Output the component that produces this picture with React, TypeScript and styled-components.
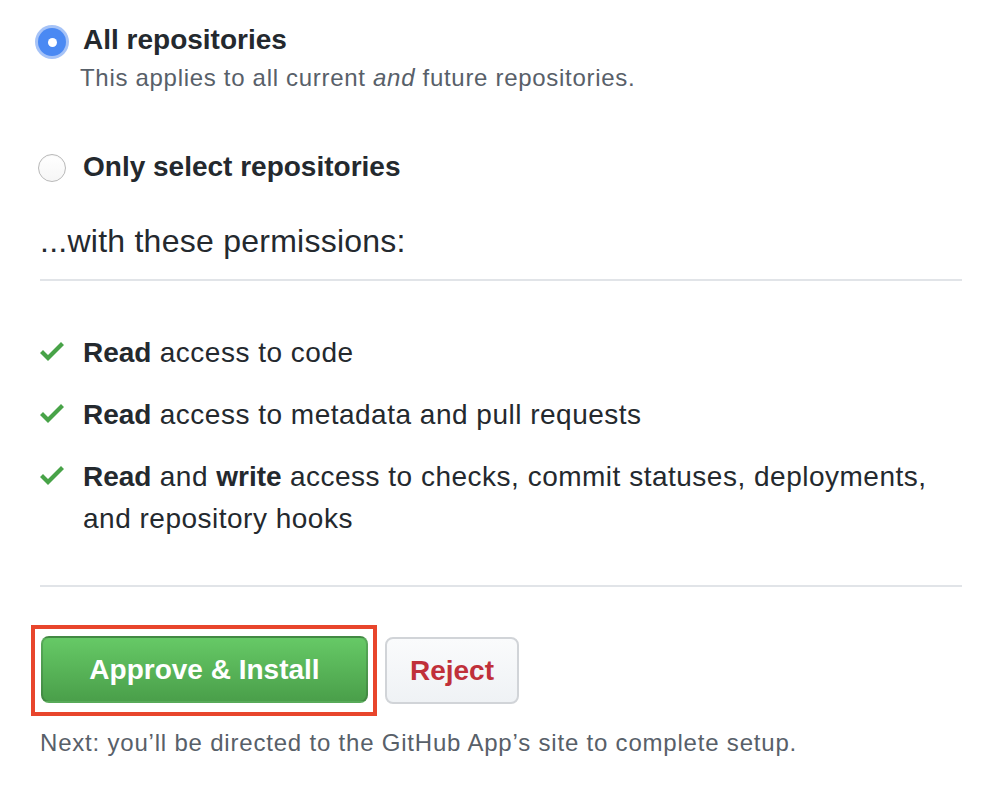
import React from "react";
import styled, { createGlobalStyle } from "styled-components";

const Global = createGlobalStyle`
  html, body { margin: 0; padding: 0; background: #ffffff; }
  body { font-family: "Liberation Sans", Arial, sans-serif; color: #24292e; }
`;

const Page = styled.div`
  width: 922px;
  padding: 20px 24px 30px 40px;
`;

const RadioRow = styled.label<{ $mt?: number }>`
  display: flex;
  align-items: flex-start;
  gap: 17px;
  margin-top: ${(p) => p.$mt ?? 0}px;
  font-size: 28px;
  font-weight: 700;
  line-height: 40px;
  color: #24292e;
`;

const Radio = styled.span<{ $checked?: boolean; $offset: number }>`
  flex: none;
  box-sizing: border-box;
  width: 28px;
  height: 28px;
  margin-top: ${(p) => p.$offset}px;
  margin-left: -2px;
  border-radius: 50%;
  display: flex;
  align-items: center;
  justify-content: center;
  ${(p) =>
    p.$checked
      ? `
    background: #4a89f3;
    box-shadow: 0 0 0 3px rgba(92, 146, 240, 0.55);
    &::after {
      content: "";
      width: 9px;
      height: 9px;
      border-radius: 50%;
      background: #ffffff;
    }
  `
      : `
    background: linear-gradient(#ffffff, #f6f6f6);
    border: 1.5px solid #b9b9b9;
    box-shadow: inset 0 1px 1px rgba(0,0,0,0.04);
  `}
`;

const Description = styled.p`
  margin: 0 0 0 40px;
  font-size: 24px;
  line-height: 36px;
  letter-spacing: 0.7px;
  color: #586069;
`;

const SectionTitle = styled.h3`
  margin: 34px 0 0 0;
  padding-bottom: 18px;
  border-bottom: 2px solid #e1e4e8;
  font-size: 32px;
  font-weight: 400;
  line-height: 40px;
  letter-spacing: 0.25px;
  color: #24292e;
`;

const PermList = styled.ul`
  list-style: none;
  margin: 51px 0 0 0;
  padding: 0 0 45px 0;
  border-bottom: 2px solid #e1e4e8;
  display: flex;
  flex-direction: column;
  gap: 20px;
`;

const PermItem = styled.li`
  display: flex;
  align-items: flex-start;
  gap: 19px;
  font-size: 28px;
  line-height: 42px;
  letter-spacing: 0.5px;
  color: #24292e;
  b { font-weight: 700; letter-spacing: 0; }
`;

const CheckIcon = styled.svg`
  flex: none;
  width: 24px;
  height: 32px;
  margin-top: 3px;
  fill: #48a348;
`;

const Actions = styled.div`
  display: flex;
  align-items: flex-start;
  gap: 8px;
  margin: 38px 0 0 -9px;
`;

const Highlight = styled.div`
  display: inline-flex;
  border: 4px solid #e8452c;
  padding: 7px 5px 9px 6px;
`;

const PrimaryButton = styled.button`
  box-sizing: border-box;
  height: 67px;
  width: 327px;
  border: 2px solid rgba(27, 31, 35, 0.18);
  border-radius: 8px;
  background: linear-gradient(180deg, #66c966 0%, #4a9f4a 100%);
  color: #ffffff;
  font-family: "Liberation Sans", Arial, sans-serif;
  font-size: 28px;
  font-weight: 700;
  cursor: pointer;
`;

const SecondaryButton = styled.button`
  box-sizing: border-box;
  margin-top: 12px;
  height: 67px;
  width: 134px;
  border: 2px solid #d1d4d8;
  border-radius: 8px;
  background: linear-gradient(180deg, #fafbfc 0%, #eff2f5 100%);
  color: #c0303a;
  font-family: "Liberation Sans", Arial, sans-serif;
  font-size: 28px;
  font-weight: 700;
  cursor: pointer;
`;

const Note = styled.p`
  margin: 9px 0 0 0;
  font-size: 24px;
  line-height: 36px;
  letter-spacing: 0.8px;
  color: #586069;
`;

const Check = () => (
  <CheckIcon viewBox="0 0 12 16" aria-hidden="true">
    <path d="M12 5l-8 8-4-4 1.5-1.5L4 10l6.5-6.5L12 5z" />
  </CheckIcon>
);

export default function App() {
  return (
    <>
      <Global />
      <Page>
        <RadioRow>
          <Radio $checked $offset={8} />
          All repositories
        </RadioRow>
        <Description>
          This applies to all current <i>and</i> future repositories.
        </Description>
        <RadioRow $mt={51}>
          <Radio $offset={7} />
          Only select repositories
        </RadioRow>

        <SectionTitle>...with these permissions:</SectionTitle>

        <PermList>
          <PermItem>
            <Check />
            <span>
              <b>Read</b> access to code
            </span>
          </PermItem>
          <PermItem>
            <Check />
            <span>
              <b>Read</b> access to metadata and pull requests
            </span>
          </PermItem>
          <PermItem>
            <Check />
            <span>
              <b>Read</b> and <b>write</b> access to checks, commit statuses, deployments,
              <br />
              and repository hooks
            </span>
          </PermItem>
        </PermList>

        <Actions>
          <Highlight>
            <PrimaryButton>Approve &amp; Install</PrimaryButton>
          </Highlight>
          <SecondaryButton>Reject</SecondaryButton>
        </Actions>

        <Note>Next: you’ll be directed to the GitHub App’s site to complete setup.</Note>
      </Page>
    </>
  );
}
